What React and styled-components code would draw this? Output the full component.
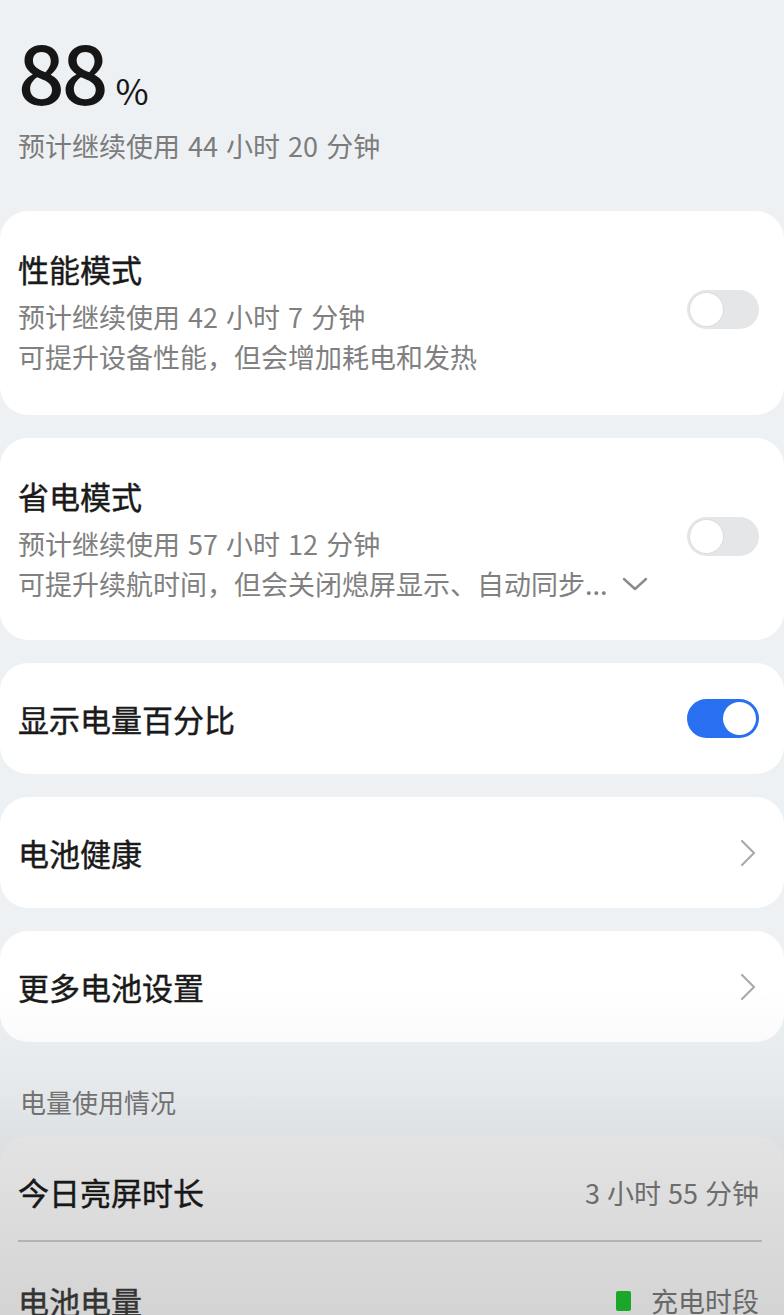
import React from "react";
import styled, { createGlobalStyle } from "styled-components";

const Global = createGlobalStyle`
  html, body { margin: 0; padding: 0; background: #eef1f4; }
  body { font-family: "Noto Sans CJK SC", "Noto Sans", sans-serif; }
  * { box-sizing: border-box; }
`;

const Page = styled.div`
  position: relative;
  width: 784px;
  height: 1315px;
  overflow: hidden;
  background: #eef1f4;
  display: flex;
  flex-direction: column;
`;

const Header = styled.div`
  padding: 29px 18px 0;
  display: flex;
  flex-direction: column;
`;

const BigRow = styled.div`
  display: flex;
  align-items: baseline;
  gap: 10px;
  color: #161616;
`;

const BigNum = styled.span`
  font-size: 82px;
  line-height: 82px;
  font-weight: 500;
  letter-spacing: -3px;
`;

const Pct = styled.span`
  font-size: 36px;
  font-weight: 400;
`;

const HeaderSub = styled.div`
  margin-top: 13px;
  font-size: 27px;
  line-height: 36px;
  word-spacing: 2px;
  color: #7c7c7c;
`;

const Cards = styled.div`
  margin-top: 47px;
  display: flex;
  flex-direction: column;
  gap: 23px;
`;

const Card = styled.div`
  background: ${(p) => p.$bg || "#ffffff"};
  border-radius: 28px;
  padding: ${(p) => p.$pad || "0 25px 0 18px"};
  display: flex;
  flex-direction: ${(p) => (p.$column ? "column" : "row")};
  align-items: ${(p) => (p.$column ? "stretch" : "center")};
  min-height: ${(p) => p.$h || 111}px;
`;

const CardBody = styled.div`
  flex: 1;
  display: flex;
  flex-direction: column;
`;

const Title = styled.div`
  font-size: 31px;
  line-height: ${(p) => p.$lh || 56}px;
  font-weight: 400;
  -webkit-text-stroke: 0.45px currentColor;
  color: ${(p) => p.$color || "#1a1a1a"};
`;

const Sub = styled.div`
  font-size: 27px;
  line-height: 40px;
  word-spacing: 2px;
  color: #808080;
  display: flex;
  align-items: center;
  gap: 13px;
`;

const Track = styled.div`
  width: 72px;
  height: 39px;
  border-radius: 20px;
  background: ${(p) => (p.$on ? "#2870ef" : "#e5e6e7")};
  padding: 3px;
  display: flex;
  justify-content: ${(p) => (p.$on ? "flex-end" : "flex-start")};
  flex-shrink: 0;
`;

const Knob = styled.div`
  width: 33px;
  height: 33px;
  border-radius: 50%;
  background: #ffffff;
  box-shadow: ${(p) => (p.$on ? "none" : "0 0 0 1px rgba(0,0,0,0.04)")};
`;

const Toggle = ({ on }) => (
  <Track $on={on}>
    <Knob $on={on} />
  </Track>
);

const ChevronRight = () => (
  <svg width="18" height="30" viewBox="0 0 18 30" fill="none">
    <path d="M3 3 L15 15 L3 27" stroke="#ababab" strokeWidth="2.2" strokeLinecap="round" strokeLinejoin="round" />
  </svg>
);

const ChevronDown = () => (
  <svg width="28" height="16" viewBox="0 0 28 16" fill="none">
    <path d="M3 3 L14 13 L25 3" stroke="#8a8a8a" strokeWidth="2.4" strokeLinecap="round" strokeLinejoin="round" />
  </svg>
);

const SectionLabel = styled.div`
  margin: 42px 0 16px;
  padding-left: 20px;
  font-size: 26px;
  line-height: 36px;
  color: #777;
`;

const UsageRow = styled.div`
  display: flex;
  align-items: center;
  justify-content: space-between;
  height: ${(p) => p.$h}px;
  padding-top: ${(p) => p.$pt || 0}px;
`;

const Value = styled.div`
  font-size: 27px;
  word-spacing: 1px;
  color: #777;
  display: flex;
  align-items: center;
  gap: 20px;
`;

const Legend = styled.span`
  width: 15px;
  height: 20px;
  border-radius: 2px;
  background: #1fbf2f;
`;

const Divider = styled.div`
  height: 1.5px;
  background: #c9c9c9;
  margin-right: -3px;
`;

const Scrim = styled.div`
  position: absolute;
  left: 0;
  right: 0;
  top: 990px;
  bottom: 0;
  pointer-events: none;
  background: linear-gradient(
    to bottom,
    rgba(0, 0, 0, 0) 0%,
    rgba(0, 0, 0, 0.035) 30%,
    rgba(0, 0, 0, 0.065) 45%,
    rgba(0, 0, 0, 0.13) 100%
  );
`;

export default function App() {
  return (
    <>
      <Global />
      <Page>
        <Header>
          <BigRow>
            <BigNum>88</BigNum>
            <Pct>%</Pct>
          </BigRow>
          <HeaderSub>预计继续使用 44 小时 20 分钟</HeaderSub>
        </Header>

        <Cards>
          <Card $h={204} $pad="30px 25px 38px 18px">
            <CardBody>
              <Title>性能模式</Title>
              <Sub>预计继续使用 42 小时 7 分钟</Sub>
              <Sub>可提升设备性能，但会增加耗电和发热</Sub>
            </CardBody>
            <Toggle on={false} />
          </Card>

          <Card $h={202} $pad="30px 25px 36px 18px">
            <CardBody>
              <Title>省电模式</Title>
              <Sub>预计继续使用 57 小时 12 分钟</Sub>
              <Sub>
                可提升续航时间，但会关闭熄屏显示、自动同步...
                <ChevronDown />
              </Sub>
            </CardBody>
            <Toggle on={false} />
          </Card>

          <Card>
            <CardBody>
              <Title $lh={44}>显示电量百分比</Title>
            </CardBody>
            <Toggle on />
          </Card>

          <Card $pad="0 27px 0 18px">
            <CardBody>
              <Title $lh={44}>电池健康</Title>
            </CardBody>
            <ChevronRight />
          </Card>

          <Card $pad="0 27px 0 18px">
            <CardBody>
              <Title $lh={44}>更多电池设置</Title>
            </CardBody>
            <ChevronRight />
          </Card>
        </Cards>

        <SectionLabel>电量使用情况</SectionLabel>

        <Card $column $bg="#f3f3f3" $h={300} $pad="0 25px 0 18px">
          <UsageRow $h={104} $pt={8}>
            <Title $lh={40}>今日亮屏时长</Title>
            <Value>3 小时 55 分钟</Value>
          </UsageRow>
          <Divider />
          <UsageRow $h={118}>
            <Title $lh={40} $color="#3a3a3a">电池电量</Title>
            <Value>
              <Legend />
              充电时段
            </Value>
          </UsageRow>
        </Card>

        <Scrim />
      </Page>
    </>
  );
}
